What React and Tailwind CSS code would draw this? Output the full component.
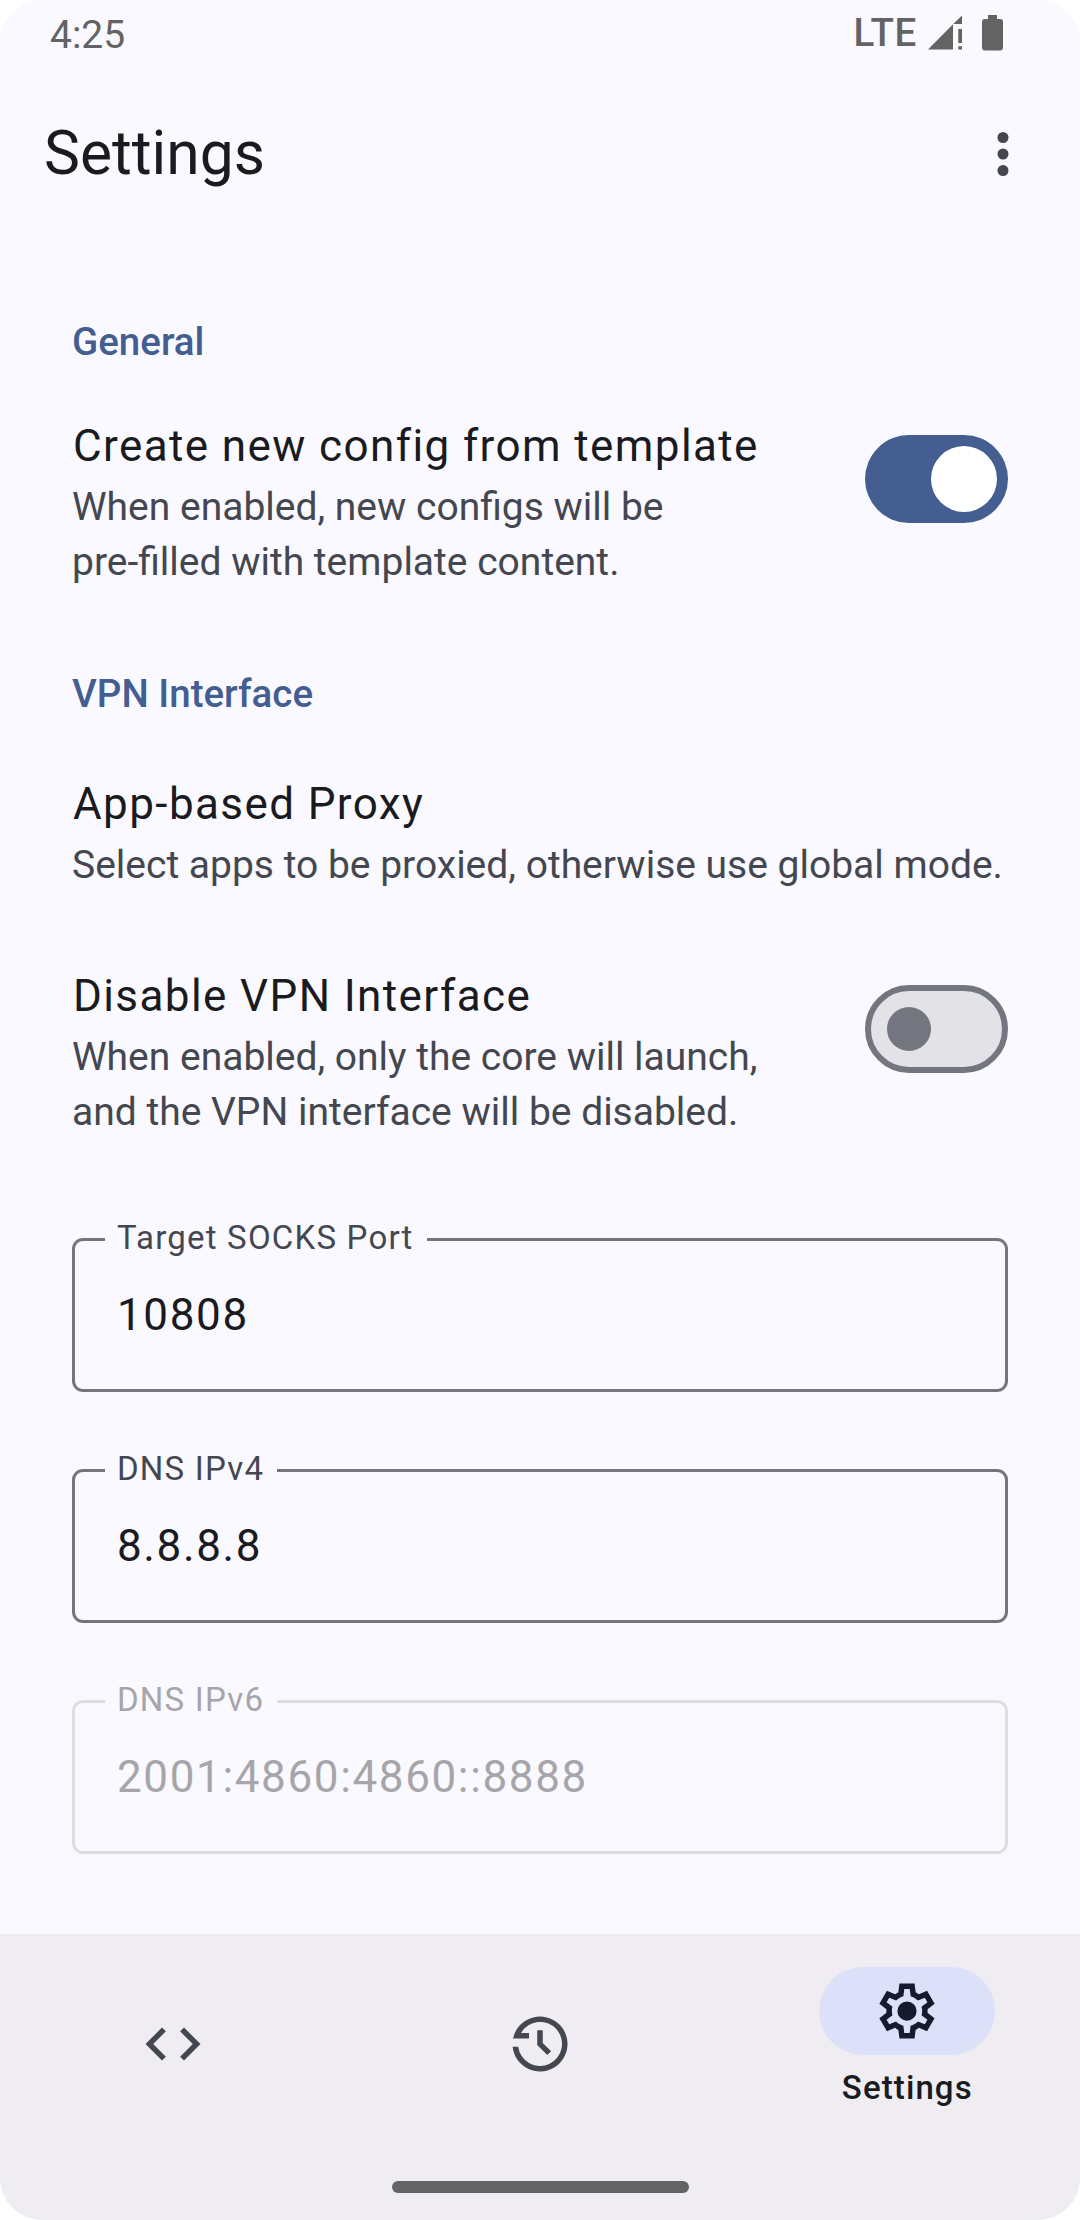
import React from "react";

function StatusBar() {
  return (
    <div className="flex h-[66px] shrink-0 items-start justify-between pl-[50px] pr-[77px] text-[#636363]">
      <span className="pt-3 text-[39px] leading-[46px]">4:25</span>
      <div className="flex items-start">
        <span className="pt-[10px] text-[38.5px] font-medium leading-[46px] tracking-[0.7px]">LTE</span>
        <svg className="ml-[11px] mt-[15px]" width="36" height="36" viewBox="0 0 36 36" fill="currentColor">
          <path d="M0 34.5 25 9.2V34.5zM26 8.2 34 .5V9H25.3zM30.3 14H34V28H30.3zM30.3 31.3H34V34.5H30.3z" />
        </svg>
        <svg className="ml-[18px] mt-[15px]" width="21" height="36" viewBox="0 0 21 36" fill="currentColor">
          <path d="M6 0h9v4h3a3 3 0 0 1 3 3v25.500a3 3 0 0 1-3 3H3a3 3 0 0 1-3-3V7a3 3 0 0 1 3-3h3z" />
        </svg>
      </div>
    </div>
  );
}

function AppBar() {
  return (
    <header className="flex h-[176px] shrink-0 items-center justify-between pl-11 pr-11">
      <h1 className="pb-[2px] text-[60.5px] leading-[77px] text-[#1a1b20]">Settings</h1>
      <button className="flex size-[66px] items-center justify-center text-[#44474f]" aria-label="More options">
        <svg width="66" height="66" viewBox="0 0 24 24" fill="currentColor">
          <circle cx="12" cy="6" r="2" />
          <circle cx="12" cy="12" r="2" />
          <circle cx="12" cy="18" r="2" />
        </svg>
      </button>
    </header>
  );
}

function Switch({ on }) {
  return on ? (
    <div className="mt-[22px] flex h-[88px] w-[143px] shrink-0 items-center justify-end rounded-full bg-[#445e91] pr-[11px]">
      <div className="size-[66px] rounded-full bg-white" />
    </div>
  ) : (
    <div className="mt-[22px] flex h-[88px] w-[143px] shrink-0 items-center rounded-full border-[6px] border-[#73767e] bg-[#e2e2e7] pl-4">
      <div className="size-11 rounded-full bg-[#73767e]" />
    </div>
  );
}

function SectionTitle({ children }) {
  return <h2 className="text-[38.5px] font-medium leading-[55px] text-[#445e91]">{children}</h2>;
}

function Item({ title, lines, children }) {
  return (
    <div className="flex items-start justify-between">
      <div className="whitespace-nowrap">
        <div className="pl-px text-[44px] leading-[66px] tracking-[1.4px] text-[#1a1b20]">{title}</div>
        <div className="-mb-px pt-px text-[39px] leading-[55px] text-[#44474f]">
          {lines.map((line) => (
            <div key={line}>{line}</div>
          ))}
        </div>
      </div>
      {children}
    </div>
  );
}

function Field({ label, value, disabled }) {
  return (
    <div
      className={
        disabled
          ? "relative h-[154px] rounded-[11px] border-[3px] border-[#dedde2] text-[#a6a5aa]"
          : "relative h-[154px] rounded-[11px] border-[3px] border-[#73767e] text-[#1a1b20]"
      }
    >
      <span
        className={
          disabled
            ? "absolute -top-[25px] left-[30px] bg-[#faf9ff] pl-3 pr-[13px] text-[33px] leading-[44px] tracking-[1.2px] text-[#a6a5aa]"
            : "absolute -top-[25px] left-[30px] bg-[#faf9ff] pl-3 pr-[13px] text-[33px] leading-[44px] tracking-[1.2px] text-[#44474f]"
        }
      >
        {label}
      </span>
      <div className="pl-[42px] pt-[41px] text-[44px] leading-[66px] tracking-[1.63px]">{value}</div>
    </div>
  );
}

const icons = {
  code: "M9.4 16.6L4.8 12l4.600-4.600L8 6l-6 6 6 6 1.400-1.400zm5.200 0l4.600-4.600-4.600-4.600L16 6l6 6-6 6-1.400-1.400z",
  history:
    "M4.070 13A8 8 0 1 0 5.070 8H8V10H2.200A10 10 0 1 1 2.050 13zM11 7H13V11.600L16.050 14.600L14.650 16L11 12.400z",
  settings:
    "M9.250 22l-.4-3.200q-.325-.125-.612-.3-.288-.175-.563-.375L4.700 19.375l-2.750-4.750 2.575-1.950Q4.500 12.500 4.500 12.338v-.675q0-.163.025-.338L1.950 9.375l2.750-4.750 2.975 1.250q.275-.2.575-.375.3-.175.6-.3l.4-3.200h5.500l.4 3.200q.325.125.613.3.287.175.562.375l2.975-1.250 2.750 4.750-2.575 1.950q.025.175.025.338v.674q0 .163-.05.338l2.575 1.950-2.750 4.750-2.950-1.250q-.275.2-.575.375-.3.175-.6.3l-.4 3.200zM11 20h1.975l.35-2.650q.775-.2 1.438-.588.662-.387 1.212-.937l2.475 1.025.975-1.700-2.150-1.625q.125-.35.175-.737Q17.500 12.400 17.500 12t-.05-.787q-.05-.388-.175-.738l2.150-1.625-.975-1.700-2.475 1.050q-.55-.575-1.212-.963-.663-.387-1.438-.587L13 4h-1.975l-.35 2.650q-.775.2-1.437.587-.663.388-1.213.938L5.550 7.150l-.975 1.700 2.150 1.600q-.125.375-.175.750-.05.375-.05.8 0 .4.05.775.05.375.175.750l-2.150 1.625.975 1.700 2.475-1.050q.55.575 1.213.963.662.387 1.437.587L11 20zM12 15.500a3.500 3.500 0 1 0 0-7 3.500 3.500 0 0 0 0 7z",
};

function Icon({ name }) {
  return (
    <svg width="66" height="66" viewBox="0 0 24 24" fill="currentColor" fillRule="evenodd">
      <path d={icons[name]} />
    </svg>
  );
}

function BottomNav() {
  return (
    <nav className="flex h-[286px] shrink-0 flex-col justify-between bg-[#efedf1]">
      <div className="grid h-[220px] grid-cols-3 gap-[22px] text-[#44474f]">
        <div className="flex items-center justify-center">
          <Icon name="code" />
        </div>
        <div className="flex items-center justify-center">
          <Icon name="history" />
        </div>
        <div className="flex flex-col items-center pt-[33px]">
          <div className="flex h-[88px] w-[176px] items-center justify-center rounded-full bg-[#dce1f9] text-[#141b2c]">
            <Icon name="settings" />
          </div>
          <span className="mt-[11px] text-[33px] font-medium leading-[44px] tracking-[1.1px] text-[#1a1b20]">
            Settings
          </span>
        </div>
      </div>
      <div className="mb-[27px] h-3 w-[297px] self-center rounded-full bg-[#636363]" />
    </nav>
  );
}

export default function App() {
  return (
    <div className="h-[2220px] w-[1080px] bg-white font-['Roboto',sans-serif]">
      <div className="flex h-full flex-col overflow-hidden rounded-[42px] bg-[#faf9ff]">
        <StatusBar />
        <AppBar />
        <main className="flex min-h-0 flex-1 flex-col px-[72px] pt-[72px]">
          <SectionTitle>General</SectionTitle>
          <div className="mt-11">
            <Item
              title="Create new config from template"
              lines={["When enabled, new configs will be", "pre-filled with template content."]}
            >
              <Switch on />
            </Item>
          </div>
          <div className="mt-[77px]">
            <SectionTitle>VPN Interface</SectionTitle>
          </div>
          <div className="mt-[50px] flex flex-col gap-[71px]">
            <Item title="App-based Proxy" lines={["Select apps to be proxied, otherwise use global mode."]} />
            <Item
              title="Disable VPN Interface"
              lines={["When enabled, only the core will launch,", "and the VPN interface will be disabled."]}
            >
              <Switch />
            </Item>
          </div>
          <div className="mt-[99px] flex flex-col gap-[77px]">
            <Field label="Target SOCKS Port" value="10808" />
            <Field label="DNS IPv4" value="8.8.8.8" />
            <Field label="DNS IPv6" value="2001:4860:4860::8888" disabled />
          </div>
        </main>
        <BottomNav />
      </div>
    </div>
  );
}
